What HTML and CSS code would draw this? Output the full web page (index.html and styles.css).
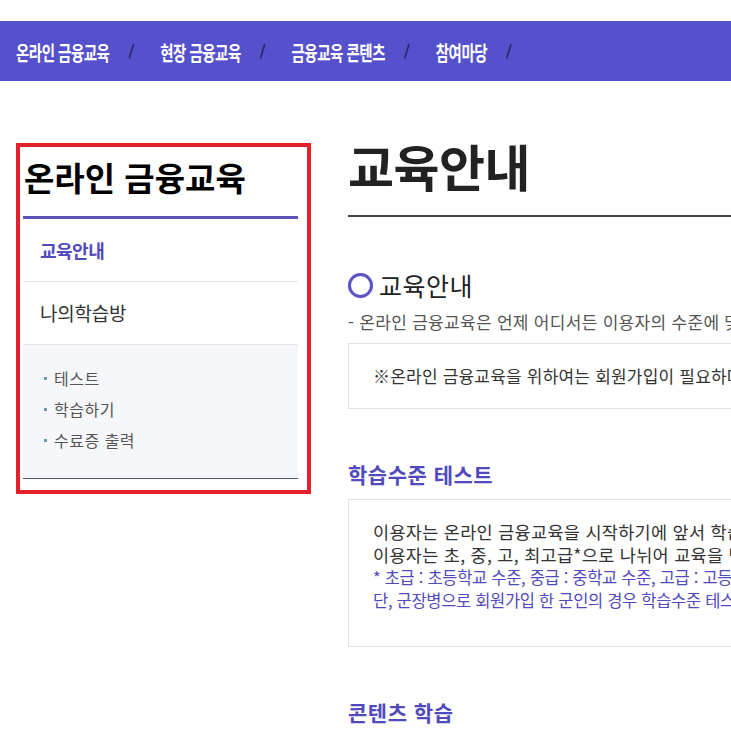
FILE: index.html
```html
<!DOCTYPE html>
<html lang="ko">
<head>
    <meta charset="UTF-8">
    <meta name="viewport" content="width=device-width, initial-scale=1.0">
    <title>교육안내 - 온라인 금융교육</title>
    <link rel="stylesheet" href="styles.css">
</head>
<body>
    <nav class="gnb">
        <ul>
            <li><a href="#">온라인 금융교육</a></li>
            <li><a href="#">현장 금융교육</a></li>
            <li><a href="#">금융교육 콘텐츠</a></li>
            <li><a href="#">참여마당</a></li>
        </ul>
    </nav>

    <div class="page">
        <aside class="lnb-box">
            <div class="lnb">
                <h2 class="lnb-title">온라인 금융교육</h2>
                <ul class="lnb-menu">
                    <li class="on"><a href="#">교육안내</a></li>
                    <li><a href="#">나의학습방</a></li>
                </ul>
                <ul class="lnb-sub">
                    <li><a href="#">테스트</a></li>
                    <li><a href="#">학습하기</a></li>
                    <li><a href="#">수료증 출력</a></li>
                </ul>
            </div>
        </aside>

        <main class="content">
            <h1 class="page-title">교육안내</h1>

            <h3 class="sec-title">교육안내</h3>
            <p class="desc">- 온라인 금융교육은 언제 어디서든 이용자의 수준에 맞는 교육을 받을 수 있습니다.</p>
            <div class="info-box">
                <p>※온라인 금융교육을 위하여는 회원가입이 필요하며, 가입 후 학습이 가능합니다.</p>
            </div>

            <h4 class="sub-title">학습수준 테스트</h4>
            <div class="info-box big">
                <p>이용자는 온라인 금융교육을 시작하기에 앞서 학습수준 테스트를 받게 됩니다.</p>
                <p>이용자는 초, 중, 고, 최고급*으로 나뉘어 교육을 받게 됩니다.</p>
                <p class="point">* 초급 : 초등학교 수준, 중급 : 중학교 수준, 고급 : 고등학교 수준</p>
                <p class="point">단, 군장병으로 회원가입 한 군인의 경우 학습수준 테스트 없이 학습합니다.</p>
            </div>

            <h4 class="sub-title">콘텐츠 학습</h4>
        </main>
    </div>
</body>
</html>
```

FILE: styles.css
```css
:root {
    --purple: #5149be;
    --nav: #5550cb;
    --text: #333;
    --line: #e2e2e2;
}

* {
    box-sizing: border-box;
}

html, body {
    overflow: hidden;
}

body {
    margin: 0;
    font-family: "Noto Sans CJK KR", "Noto Sans", sans-serif;
    color: var(--text);
    background: #fff;
}

ul {
    list-style: none;
    margin: 0;
    padding: 0;
}

a {
    color: inherit;
    text-decoration: none;
}

/* top menu */
.gnb {
    margin-top: 21px;
    height: 60px;
    background: var(--nav);
    overflow: hidden;
}

.gnb ul {
    display: flex;
    align-items: center;
    height: 100%;
    padding-left: 16px;
}

.gnb li {
    display: flex;
    align-items: center;
    white-space: nowrap;
}

.gnb li a {
    display: inline-block;
    color: #fff;
    font-size: 14.5px;
    font-weight: bold;
    letter-spacing: -0.5px;
    transform: scaleY(1.4);
}

.gnb li::after {
    content: '/';
    color: #22235a;
    font-size: 17px;
    font-family: "DejaVu Sans", sans-serif;
    margin: 0 26px 0 19px;
}

/* layout */
.page {
    display: flex;
    align-items: flex-start;
    padding-left: 16px;
}

/* left menu */
.lnb-box {
    width: 295px;
    margin-top: 62px;
    border: 4px solid #e3212b;
    padding: 0 9px 11px 3px;
    flex-shrink: 0;
}

.lnb-title {
    margin: 0;
    padding: 10px 0 19px 1px;
    font-size: 33px;
    line-height: 40px;
    font-weight: bold;
    color: #000;
    letter-spacing: 0;
    border-bottom: 3px solid #5a53b8;
}

.lnb-menu li a {
    display: block;
    height: 63px;
    line-height: 62px;
    padding-left: 17px;
    font-size: 19px;
    letter-spacing: -0.2px;
    color: #333;
    border-bottom: 1px solid #e6e6e6;
}

.lnb-menu li.on a {
    color: var(--purple);
    font-size: 18px;
    font-weight: bold;
    letter-spacing: -0.5px;
}

.lnb-sub {
    background: #f5f7fa;
    padding: 18px 0 22px 21px;
    border-bottom: 1px solid #55508a;
}

.lnb-sub li a {
    display: flex;
    align-items: center;
    gap: 7px;
    font-size: 16px;
    line-height: 31px;
    color: #555;
    letter-spacing: 0.5px;
}

.lnb-sub li a::before {
    content: '';
    width: 3px;
    height: 3px;
    background: #6a9bb3;
}

/* content */
.content {
    flex: 1;
    min-width: 0;
    margin-left: 37px;
    padding-top: 56px;
}

.page-title {
    margin: 0;
    padding-bottom: 21px;
    font-size: 50px;
    line-height: 57px;
    font-weight: bold;
    letter-spacing: -0.5px;
    color: #222;
    border-bottom: 2px solid #444;
}

.sec-title {
    display: flex;
    align-items: center;
    gap: 6px;
    margin: 53px 0 0;
    font-size: 25px;
    line-height: 30px;
    font-weight: normal;
    color: #222;
    letter-spacing: 0.5px;
}

.sec-title::before {
    content: '';
    width: 19px;
    height: 19px;
    border-radius: 50%;
    border: 3.5px solid #5b52c8;
    box-shadow: 0 0 1px rgba(91, 82, 200, 0.5);
}

.desc {
    margin: 11px 0 0;
    font-size: 17px;
    line-height: 22px;
    color: #555;
    letter-spacing: 0.3px;
    white-space: nowrap;
}

.info-box {
    margin-top: 10px;
    border: 1px solid var(--line);
    border-right: 0;
    padding: 21px 0 21px 24px;
}

.info-box p {
    margin: 0;
    font-size: 17px;
    line-height: 22px;
    letter-spacing: 0.2px;
    white-space: nowrap;
}

.info-box.big {
    margin-top: 12px;
    padding: 20px 0 34px 24px;
}

.info-box.big p {
    font-size: 17.5px;
    line-height: 23px;
    letter-spacing: 0.3px;
}

.info-box.big p.point {
    font-size: 16.5px;
    color: var(--purple);
    letter-spacing: -0.3px;
}

.sub-title {
    margin: 52px 0 0;
    font-size: 21px;
    line-height: 26px;
    font-weight: bold;
    color: var(--purple);
    letter-spacing: 0.5px;
}
```
